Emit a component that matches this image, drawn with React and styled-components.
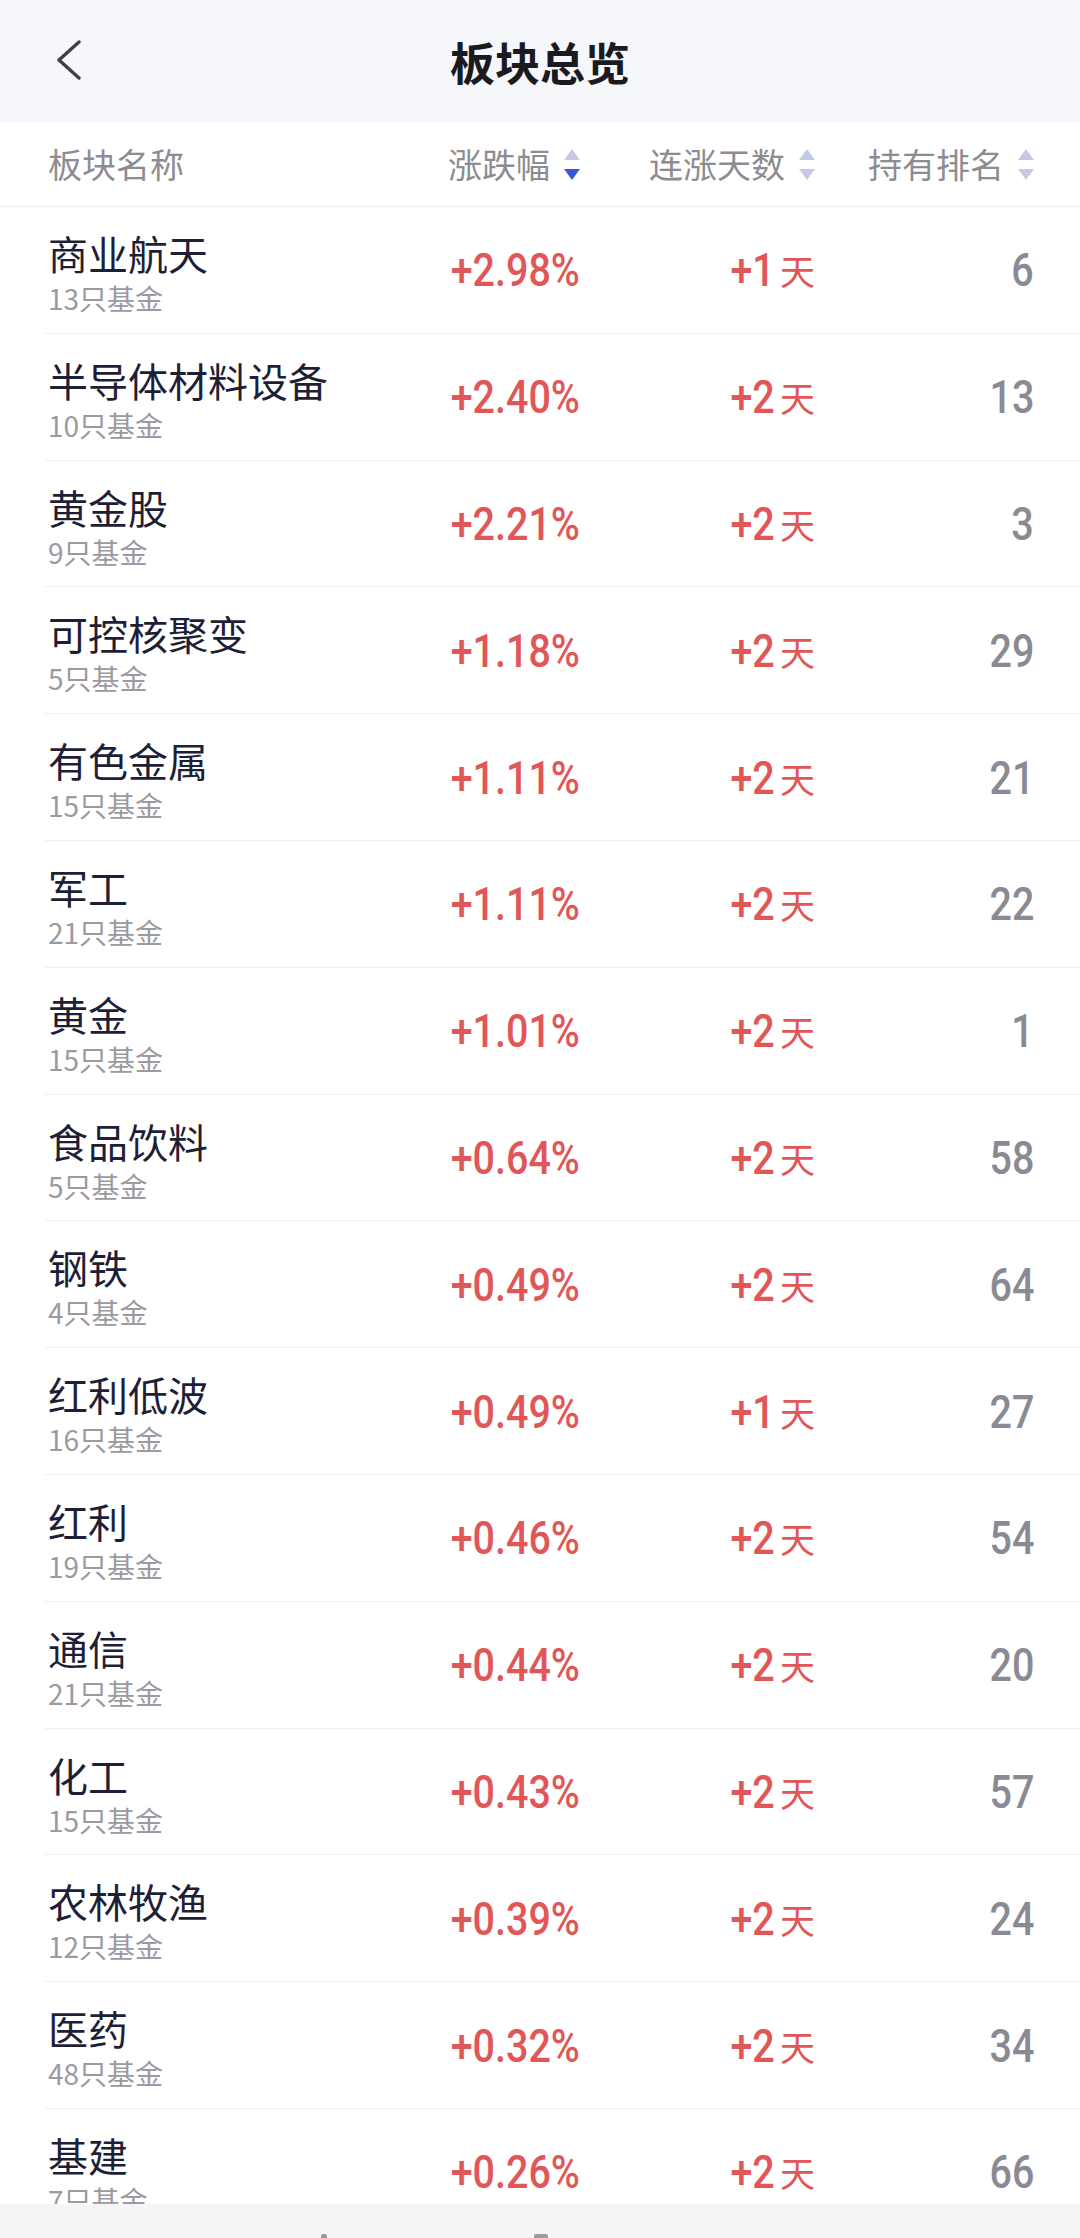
import React from "react";
import styled, { createGlobalStyle } from "styled-components";

const GlobalStyle = createGlobalStyle`
  html, body {
    margin: 0;
    padding: 0;
    background: #ffffff;
  }
  body {
    font-family: "Noto Sans CJK SC", "Noto Sans", sans-serif;
    -webkit-font-smoothing: antialiased;
  }
`;

const Page = styled.div`
  width: 1080px;
  height: 2238px;
  display: flex;
  flex-direction: column;
  overflow: hidden;
  background: #fff;
`;

const NavBar = styled.div`
  height: 122px;
  flex-shrink: 0;
  display: grid;
  grid-template-columns: 160px 1fr 160px;
  align-items: center;
  background: #f6f7fa;
`;

const BackButton = styled.div`
  padding-left: 56px;
  display: flex;
  align-items: center;
  svg {
    display: block;
  }
`;

const Title = styled.h1`
  margin: 0;
  text-align: center;
  font-size: 45px;
  font-weight: 700;
  color: #1a1a1f;
  line-height: 1;
`;

const HeaderRow = styled.div`
  height: 85px;
  flex-shrink: 0;
  box-sizing: border-box;
  border-bottom: 1px solid #eeeef0;
  display: grid;
  grid-template-columns: 1fr 180px 235px 219px;
  align-items: center;
  padding: 0 46px 0 48px;
`;

const HeadCell = styled.div`
  display: flex;
  align-items: center;
  justify-content: ${({ $left }) => ($left ? "flex-start" : "flex-end")};
  gap: 14px;
  font-size: 34px;
  color: #8c8c92;
  line-height: 1;
`;

const List = styled.div`
  flex: 1;
  overflow: hidden;
`;

const Row = styled.div`
  height: 126.8px;
  box-sizing: border-box;
  margin-left: 45px;
  padding: 0 46px 0 3px;
  border-bottom: 1px solid #f0f0f2;
  display: grid;
  grid-template-columns: 1fr 180px 235px 219px;
  align-items: center;
`;

const NameCell = styled.div`
  align-self: start;
  padding-top: 21px;
  display: flex;
  flex-direction: column;
`;

const Name = styled.div`
  font-size: 40px;
  line-height: 50px;
  color: #1e1f36;
`;

const Sub = styled.div`
  font-size: 28px;
  line-height: 40px;
  color: #9a9aa0;
`;

const ValueCell = styled.div`
  display: flex;
  justify-content: flex-end;
  align-items: center;
  color: ${({ $tone }) => ($tone === "up" ? "#e15656" : "#898a94")};
`;

const Num = styled.span`
  display: inline-block;
  font-family: Roboto, "Liberation Sans", sans-serif;
  font-weight: 500;
  font-size: 47px;
  line-height: 1;
  transform: scaleX(0.84);
  transform-origin: right center;
`;

const Unit = styled.span`
  font-size: 35px;
  line-height: 1;
  margin-left: 5px;
`;

const Footer = styled.div`
  height: 34px;
  flex-shrink: 0;
  background: #f5f5f6;
  display: flex;
  align-items: flex-end;
  padding-left: 321px;
`;

const TabPeek = styled.span`
  display: block;
  width: ${({ $w }) => $w}px;
  height: 4px;
  margin-right: ${({ $gap }) => $gap || 0}px;
  background: #9a9a9e;
  border-radius: 2px 2px 0 0;
`;

const SortIcon = ({ active }) => (
  <svg width="16" height="31" viewBox="0 0 16 31">
    <polygon points="8,0 16,11 0,11" fill="#c6c9e4" />
    <polygon points="0,20 16,20 8,31" fill={active ? "#3b57d9" : "#c6c9e4"} />
  </svg>
);

const rows = [
  ["商业航天", 13, "+2.98%", 1, 6],
  ["半导体材料设备", 10, "+2.40%", 2, 13],
  ["黄金股", 9, "+2.21%", 2, 3],
  ["可控核聚变", 5, "+1.18%", 2, 29],
  ["有色金属", 15, "+1.11%", 2, 21],
  ["军工", 21, "+1.11%", 2, 22],
  ["黄金", 15, "+1.01%", 2, 1],
  ["食品饮料", 5, "+0.64%", 2, 58],
  ["钢铁", 4, "+0.49%", 2, 64],
  ["红利低波", 16, "+0.49%", 1, 27],
  ["红利", 19, "+0.46%", 2, 54],
  ["通信", 21, "+0.44%", 2, 20],
  ["化工", 15, "+0.43%", 2, 57],
  ["农林牧渔", 12, "+0.39%", 2, 24],
  ["医药", 48, "+0.32%", 2, 34],
  ["基建", 7, "+0.26%", 2, 66],
];

const App = () => {
  return (
    <Page>
      <GlobalStyle />
      <NavBar>
        <BackButton>
          <svg width="26" height="42" viewBox="0 0 26 42">
            <polyline
              points="23,2 3,20 23,38"
              fill="none"
              stroke="#3f3f47"
              strokeWidth="3.4"
              strokeLinecap="round"
              strokeLinejoin="round"
            />
          </svg>
        </BackButton>
        <Title>板块总览</Title>
        <div />
      </NavBar>
      <HeaderRow>
        <HeadCell $left>板块名称</HeadCell>
        <HeadCell>
          涨跌幅
          <SortIcon active />
        </HeadCell>
        <HeadCell>
          连涨天数
          <SortIcon />
        </HeadCell>
        <HeadCell>
          持有排名
          <SortIcon />
        </HeadCell>
      </HeaderRow>
      <List>
        {rows.map(([name, funds, pct, days, rank]) => (
          <Row key={name}>
            <NameCell>
              <Name>{name}</Name>
              <Sub>{funds}只基金</Sub>
            </NameCell>
            <ValueCell $tone="up">
              <Num>{pct}</Num>
            </ValueCell>
            <ValueCell $tone="up">
              <Num>+{days}</Num>
              <Unit>天</Unit>
            </ValueCell>
            <ValueCell>
              <Num>{rank}</Num>
            </ValueCell>
          </Row>
        ))}
      </List>
      <Footer>
        <TabPeek $w={6} $gap={207} />
        <TabPeek $w={14} />
      </Footer>
    </Page>
  );
};

export default App;
